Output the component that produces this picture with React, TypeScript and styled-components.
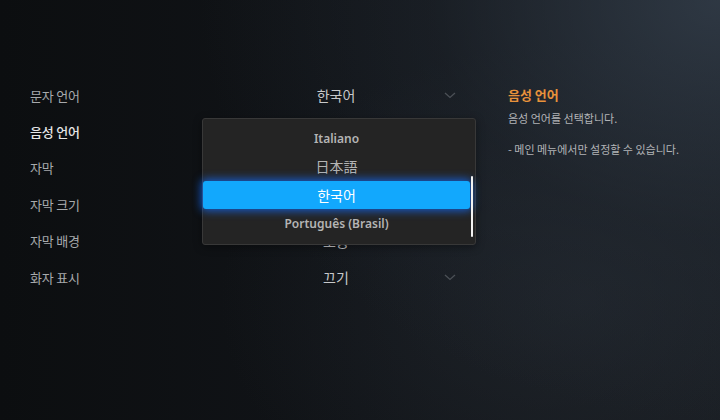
import styled, { createGlobalStyle } from "styled-components";

const GlobalStyle = createGlobalStyle`
  html, body {
    margin: 0;
    padding: 0;
    width: 720px;
    height: 420px;
    overflow: hidden;
    background: #0e1013;
  }
  * {
    box-sizing: border-box;
  }
`;

interface SettingRow {
  label: string;
  value: string;
  active?: boolean;
}

const rows: SettingRow[] = [
  { label: "문자 언어", value: "한국어" },
  { label: "음성 언어", value: "한국어", active: true },
  { label: "자막", value: "켜기" },
  { label: "자막 크기", value: "보통" },
  { label: "자막 배경", value: "보통" },
  { label: "화자 표시", value: "끄기" },
];

const options = ["Italiano", "日本語", "한국어", "Português (Brasil)"];
const selected = "한국어";

function Chevron() {
  return (
    <ChevronSvg width="12" height="7" viewBox="0 0 12 7">
      <path d="M1 1 L6 5.5 L11 1" fill="none" stroke="#4b5056" strokeWidth="1.3" />
    </ChevronSvg>
  );
}

export default function App() {
  return (
    <Screen>
      <GlobalStyle />
      <Layout>
        <Settings>
          {rows.map((row) => (
            <Row key={row.label}>
              <Label active={row.active}>{row.label}</Label>
              <ValueField>
                <ValueText>{row.value}</ValueText>
                <Chevron />
              </ValueField>
            </Row>
          ))}
          <Dropdown>
            {options.map((opt) => (
              <Option key={opt} selected={opt === selected} latin={/^[A-Za-z]/.test(opt)}>
                {opt}
              </Option>
            ))}
            <ScrollThumb />
          </Dropdown>
        </Settings>
        <Help>
          <HelpTitle>음성 언어</HelpTitle>
          <HelpText>음성 언어를 선택합니다.</HelpText>
          <HelpNote>- 메인 메뉴에서만 설정할 수 있습니다.</HelpNote>
        </Help>
      </Layout>
    </Screen>
  );
}

const Screen = styled.div`
  width: 720px;
  height: 420px;
  overflow: hidden;
  background:
    radial-gradient(ellipse 520px 420px at 720px 0px, rgba(52, 63, 76, 0.8), rgba(38, 46, 56, 0.35) 55%, rgba(0, 0, 0, 0) 100%),
    radial-gradient(ellipse 360px 260px at 580px 300px, rgba(38, 44, 52, 0.55), rgba(0, 0, 0, 0) 100%),
    linear-gradient(90deg, #0c0e10 0%, #111418 50%, #181c21 100%);
  font-family: "Noto Sans", "Noto Sans CJK KR", sans-serif;
`;

const Layout = styled.div`
  display: grid;
  grid-template-columns: 446px 1fr;
  gap: 32px;
  padding: 77px 0 0 30px;
`;

const Settings = styled.div`
  position: relative;
  display: flex;
  flex-direction: column;
`;

const Row = styled.div`
  display: grid;
  grid-template-columns: 172px 274px;
  align-items: center;
  height: 36.4px;
`;

const Label = styled.div<{ active?: boolean }>`
  font-family: "Noto Sans CJK KR", sans-serif;
  font-size: 13px;
  font-weight: ${({ active }) => (active ? 500 : 400)};
  color: ${({ active }) => (active ? "#e6e6e6" : "#a7a9ac")};
  letter-spacing: -0.2px;
`;

const ValueField = styled.div`
  position: relative;
  display: flex;
  align-items: center;
  justify-content: center;
  height: 100%;
  padding-right: 6px;
`;

const ValueText = styled.span`
  font-family: "Noto Sans CJK KR", sans-serif;
  font-size: 14px;
  font-weight: 400;
  color: #c8c9cb;
`;

const ChevronSvg = styled.svg`
  position: absolute;
  right: 20px;
  top: 50%;
  margin-top: -3px;
`;

const Dropdown = styled.div`
  position: absolute;
  left: 172px;
  top: 41px;
  width: 274px;
  height: 127px;
  padding: 5px 5px 0 0;
  background: #242424;
  border: 1px solid #383838;
  border-radius: 3px;
  display: flex;
  flex-direction: column;
  box-shadow: 0 2px 8px rgba(0, 0, 0, 0.4);
`;

const Option = styled.div<{ selected: boolean; latin: boolean }>`
  display: flex;
  align-items: center;
  justify-content: center;
  height: 28px;
  margin: ${({ selected }) => (selected ? "1px 0 0" : "0")};
  font-family: ${({ latin }) =>
    latin ? '"Noto Sans", sans-serif' : '"Noto Sans CJK KR", "Noto Sans CJK JP", sans-serif'};
  font-size: ${({ latin }) => (latin ? "12px" : "14px")};
  font-weight: ${({ latin }) => (latin ? 600 : 400)};
  color: ${({ selected }) => (selected ? "#ffffff" : "#b4b4b4")};
  background: ${({ selected }) => (selected ? "#12a8fd" : "transparent")};
  border-radius: ${({ selected }) => (selected ? "3px" : "0")};
  box-shadow: ${({ selected }) =>
    selected ? "0 0 8px 2px rgba(20, 110, 255, 0.75)" : "none"};
`;

const ScrollThumb = styled.div`
  position: absolute;
  right: 2px;
  top: 57px;
  width: 2px;
  height: 61px;
  background: #f2f2f2;
  border-radius: 1px;
`;

const Help = styled.div`
  display: flex;
  flex-direction: column;
  padding-top: 9px;
  font-family: "Noto Sans CJK KR", sans-serif;
`;

const HelpTitle = styled.div`
  font-size: 13px;
  font-weight: 700;
  color: #e8923b;
  line-height: 18px;
`;

const HelpText = styled.div`
  margin-top: 6px;
  font-size: 11px;
  color: #b2b4b7;
  line-height: 16px;
`;

const HelpNote = styled.div`
  margin-top: 15px;
  font-size: 11px;
  color: #b2b4b7;
  line-height: 16px;
`;
